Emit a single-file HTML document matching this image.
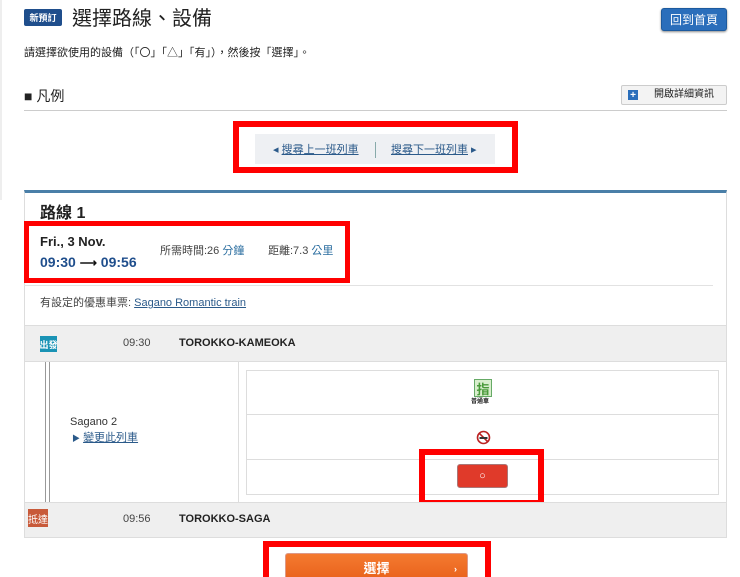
<!DOCTYPE html>
<html><head><meta charset="utf-8"><style>
*{margin:0;padding:0;box-sizing:border-box}
html,body{width:740px;height:577px;overflow:hidden}
body{background:#fff;font-family:"Liberation Sans","Noto Sans CJK TC",sans-serif;color:#222;position:relative}
.a{position:absolute;white-space:nowrap}
.f{display:flex;align-items:center;justify-content:center}
.lnk{color:#2b5a8a;text-decoration:underline}
.rb{position:absolute;border:6px solid #f00}
</style></head><body>
<div class="a" style="left:0;top:0;width:2px;height:200px;background:#eee"></div>
<div class="a f" style="left:24px;top:9px;width:38px;height:17px;background:#1f4e8c;border-radius:2px;color:#fff;font-size:9px;font-weight:bold">新預訂</div>
<div class="a" style="left:72px;top:6px;font-size:20px;line-height:26px;color:#222">選擇路線、設備</div>
<div class="a f" style="left:661px;top:8px;width:66px;height:23px;background:#2a6ebb;border:1px solid #1c5a9e;border-radius:3px;box-shadow:0 1px 2px #888;color:#fff;font-size:12px">回到首頁</div>
<div class="a" style="left:24px;top:46px;font-size:11px;line-height:14px">請選擇欲使用的設備（「〇」「△」「有」），然後按「選擇」。</div>
<div class="a" style="left:24px;top:87px;font-size:14px;line-height:18px">■ 凡例</div>
<div class="a" style="left:621px;top:85px;width:106px;height:20px;background:#f3f3f3;border:1px solid #ccc;border-radius:2px;font-size:10px"><span class="a f" style="left:6px;top:4px;width:10px;height:10px;background:#2a6ebb;color:#fff;font-size:10px;font-weight:bold">+</span><span class="a" style="left:32px;top:3px;line-height:12px">開啟詳細資訊</span></div>
<div class="a" style="left:24px;top:110px;width:703px;height:1px;background:#ccc"></div>
<div class="rb" style="left:233px;top:121px;width:285px;height:52px"></div>
<div class="a" style="left:255px;top:134px;width:240px;height:30px;background:#eef0f3"></div>
<div class="a" style="left:273px;top:143px;font-size:11px;line-height:14px;color:#2b5a8a">◂ <span class="lnk">搜尋上一班列車</span></div>
<div class="a" style="left:375px;top:142px;width:1px;height:16px;background:#8aa"></div>
<div class="a" style="left:391px;top:143px;font-size:11px;line-height:14px;color:#2b5a8a"><span class="lnk">搜尋下一班列車</span> ▸</div>
<!-- card -->
<div class="a" style="left:24px;top:190px;width:703px;height:348px;border:1px solid #ddd;border-top:3px solid #4a7fa8"></div>
<div class="a" style="left:40px;top:205px;font-size:16px;font-weight:bold;line-height:18px">路線 1</div>
<div class="rb" style="left:24px;top:221px;width:326px;height:62px;border-width:5px"></div>
<div class="a" style="left:40px;top:234px;font-size:13px;font-weight:bold;line-height:15px">Fri., 3 Nov.</div>
<div class="a" style="left:40px;top:254px;font-size:14px;font-weight:bold;line-height:17px;color:#1f4e8c">09:30 <span style="font-size:12px;color:#111">⟶</span> 09:56</div>
<div class="a" style="left:160px;top:245px;font-size:11px;line-height:13px;color:#444">所需時間:26 <span style="color:#2b6ea0">分鐘</span></div>
<div class="a" style="left:268px;top:245px;font-size:11px;line-height:13px;color:#444">距離:7.3 <span style="color:#2b6ea0">公里</span></div>
<div class="a" style="left:24px;top:285px;width:689px;height:1px;background:#e2e2e2"></div>
<div class="a" style="left:40px;top:297px;font-size:11px;line-height:13px;color:#444">有設定的優惠車票: <span class="lnk">Sagano Romantic train</span></div>
<div class="a" style="left:25px;top:325px;width:701px;height:37px;background:#efefef;border-top:1px solid #ddd;border-bottom:1px solid #ddd"></div>
<div class="a f" style="left:40px;top:336px;width:17px;height:16px;background:#1a93b5;color:#fff;font-size:9px;font-weight:bold">出發</div>
<div class="a" style="left:123px;top:337px;font-size:11px;line-height:13px;color:#444">09:30</div>
<div class="a" style="left:179px;top:337px;font-size:11px;font-weight:bold;line-height:13px">TOROKKO-KAMEOKA</div>
<div class="a" style="left:45px;top:362px;width:5px;height:140px;border-left:1px solid #999;border-right:1px solid #999"></div>
<div class="a" style="left:238px;top:362px;width:1px;height:140px;background:#ddd"></div>
<div class="a" style="left:70px;top:416px;font-size:11px;line-height:13px;color:#333">Sagano 2</div>
<div class="a" style="left:72px;top:432px;font-size:11px;line-height:13px;color:#2b5a8a"><span style="font-size:8px">▶</span> <span class="lnk">變更此列車</span></div>
<div class="a" style="left:246px;top:370px;width:473px;height:125px;border:1px solid #ddd"></div>
<div class="a" style="left:246px;top:414px;width:473px;height:1px;background:#ddd"></div>
<div class="a" style="left:246px;top:459px;width:473px;height:1px;background:#ddd"></div>
<div class="a f" style="left:474px;top:379px;width:18px;height:18px;border:1px solid #6a6;background:#d9eecd;color:#4a9a3a;font-size:13px;font-weight:bold">指</div>
<div class="a" style="left:471px;top:398px;font-size:6px;line-height:8px;font-weight:bold">普通車</div>
<svg class="a" style="left:476px;top:430px" width="15" height="15" viewBox="0 0 15 15"><circle cx="7.5" cy="7.5" r="6" fill="none" stroke="#b22" stroke-width="1.6"/><line x1="3.2" y1="3.2" x2="11.8" y2="11.8" stroke="#b22" stroke-width="1.6"/><rect x="3.5" y="7" width="8" height="2" fill="#333"/></svg>
<div class="rb" style="left:419px;top:449px;width:125px;height:57px"></div>
<div class="a f" style="left:457px;top:464px;width:51px;height:24px;background:#e03a2a;border:1px solid #a77;border-radius:3px;color:#fff;font-size:11px">○</div>
<div class="a" style="left:25px;top:502px;width:701px;height:35px;background:#efefef;border-top:1px solid #ddd"></div>
<div class="a f" style="left:28px;top:509px;width:20px;height:18px;background:#c85a3a;color:#fff;font-size:10px">抵達</div>
<div class="a" style="left:123px;top:513px;font-size:11px;line-height:13px;color:#444">09:56</div>
<div class="a" style="left:179px;top:513px;font-size:11px;font-weight:bold;line-height:13px">TOROKKO-SAGA</div>
<div class="rb" style="left:263px;top:541px;width:228px;height:42px"></div>
<div class="a" style="left:285px;top:553px;width:183px;height:30px;background:linear-gradient(#f47a30,#e8601a);border:1px solid #d98;border-radius:3px;color:#fff;font-size:13px;font-weight:bold;text-align:center;padding-top:7px;line-height:16px">選擇<span style="position:absolute;right:10px;font-size:9px">›</span></div>
</body></html>
